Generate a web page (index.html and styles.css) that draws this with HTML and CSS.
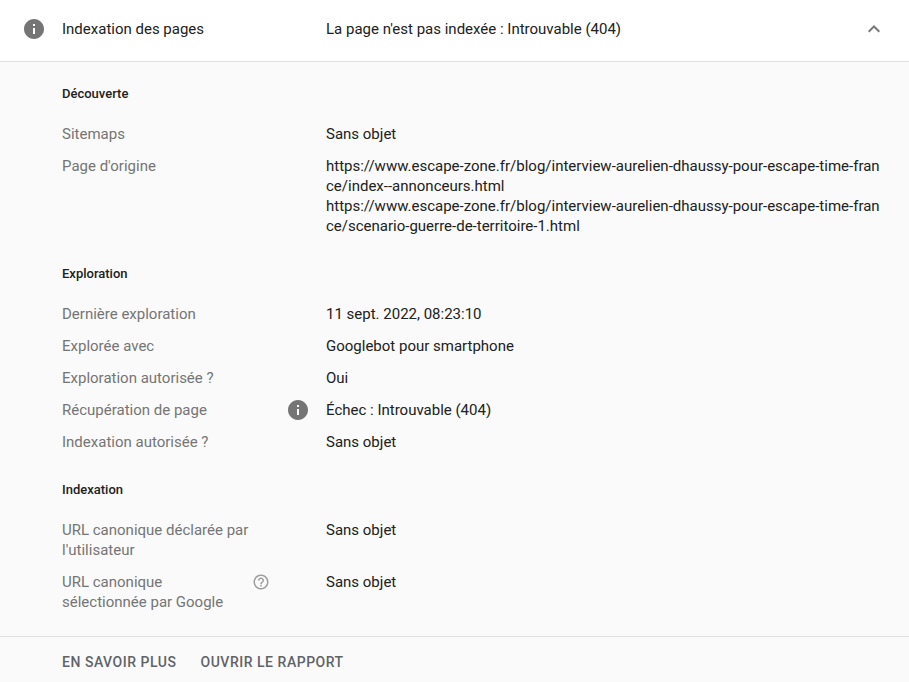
FILE: index.html
```
<!DOCTYPE html>
<html lang="fr">
<head>
<meta charset="utf-8">
<title>Indexation des pages</title>
<link rel="stylesheet" href="styles.css">
</head>
<body>
<header class="head">
  <svg class="info-icon head-icon" viewBox="0 0 24 24"><path d="M12 2C6.48 2 2 6.48 2 12s4.48 10 10 10 10-4.48 10-10S17.52 2 12 2zm1 15h-2v-6h2v6zm0-8h-2V7h2v2z"/></svg>
  <div class="head-label">Indexation des pages</div>
  <div class="head-value">La page n'est pas indexée : Introuvable (404)</div>
  <svg class="chevron" viewBox="0 0 24 24"><path d="M12 8l-6 6 1.41 1.41L12 10.83l4.59 4.58L18 14z"/></svg>
</header>
<main class="body">
  <section class="group">
    <h3 class="group-title">Découverte</h3>
    <div class="row"><div class="key">Sitemaps</div><div class="val">Sans objet</div></div>
    <div class="row"><div class="key">Page d'origine</div><div class="val">https://www.escape-zone.fr/blog/interview-aurelien-dhaussy-pour-escape-time-france/index--annonceurs.html<br>https://www.escape-zone.fr/blog/interview-aurelien-dhaussy-pour-escape-time-france/scenario-guerre-de-territoire-1.html</div></div>
  </section>
  <section class="group">
    <h3 class="group-title">Exploration</h3>
    <div class="row"><div class="key">Dernière exploration</div><div class="val">11 sept. 2022, 08:23:10</div></div>
    <div class="row"><div class="key">Explorée avec</div><div class="val">Googlebot pour smartphone</div></div>
    <div class="row"><div class="key">Exploration autorisée ?</div><div class="val">Oui</div></div>
    <div class="row"><div class="key key-spread">Récupération de page<svg class="info-icon key-icon" viewBox="0 0 24 24"><path d="M12 2C6.48 2 2 6.48 2 12s4.48 10 10 10 10-4.48 10-10S17.52 2 12 2zm1 15h-2v-6h2v6zm0-8h-2V7h2v2z"/></svg></div><div class="val">Échec : Introuvable (404)</div></div>
    <div class="row"><div class="key">Indexation autorisée ?</div><div class="val">Sans objet</div></div>
  </section>
  <section class="group">
    <h3 class="group-title">Indexation</h3>
    <div class="row"><div class="key"><span class="key-text">URL canonique déclarée par l'utilisateur</span></div><div class="val">Sans objet</div></div>
    <div class="row"><div class="key"><span class="key-text short">URL canonique sélectionnée par Google</span><svg class="help-icon" viewBox="0 0 24 24"><path d="M11 18h2v-2h-2v2zm1-16C6.48 2 2 6.48 2 12s4.48 10 10 10 10-4.48 10-10S17.52 2 12 2zm0 18c-4.41 0-8-3.59-8-8s3.59-8 8-8 8 3.59 8 8-3.59 8-8 8zm0-14c-2.21 0-4 1.79-4 4h2c0-1.1.9-2 2-2s2 .9 2 2c0 2-3 1.75-3 5h2c0-2.25 3-2.5 3-5 0-2.21-1.79-4-4-4z"/></svg></div><div class="val">Sans objet</div></div>
  </section>
</main>
<footer class="foot">
  <a class="action">EN SAVOIR PLUS</a>
  <a class="action">OUVRIR LE RAPPORT</a>
</footer>
</body>
</html>
```
FILE: styles.css
```
* { box-sizing: border-box; }
html, body { margin: 0; padding: 0; }
body {
  width: 909px;
  height: 682px;
  overflow: hidden;
  background: #fafafa;
  color: #212121;
  font-family: Roboto, "Liberation Sans", sans-serif;
  font-size: 15px;
  line-height: 20px;
}
.head {
  display: flex;
  align-items: center;
  height: 62px;
  padding: 0 23px 3px 24px;
  background: #fff;
  border-bottom: 1px solid #e0e0e0;
}
.info-icon { fill: #757575; display: block; flex: none; }
.head-icon { width: 24px; height: 24px; margin-left: -2px; margin-right: 16px; }
.head-label { width: 264px; }
.head-value { flex: 1; }
.chevron { width: 24px; height: 24px; fill: #757575; flex: none; }
.body { padding-left: 62px; }
.group { padding-top: 22px; }
.group-title {
  margin: 0 0 14px;
  font-size: 13px;
  font-weight: 500;
  line-height: 20px;
}
.row { display: flex; padding: 6px 0; }
.key {
  width: 264px;
  flex: none;
  color: #757575;
  display: flex;
  align-items: flex-start;
}
.key-spread { justify-content: space-between; padding-right: 16px; }
.key-text { width: 190px; flex: none; }
.key-text.short { width: 170px; }
.val { width: 554px; word-break: break-all; }
.key-icon { width: 24px; height: 24px; margin: -2px 0; }
.help-icon { width: 18px; height: 18px; fill: #9e9e9e; display: block; flex: none; margin-left: 20px; margin-top: 1px; }
.foot {
  position: absolute;
  left: 0;
  right: 0;
  top: 636px;
  height: 46px;
  border-top: 1px solid #e0e0e0;
  display: flex;
  align-items: center;
  gap: 24px;
  padding: 4px 0 0 62px;
}
.action {
  color: #5f6368;
  font-size: 14px;
  font-weight: 500;
  letter-spacing: 0.52px;
}
```
